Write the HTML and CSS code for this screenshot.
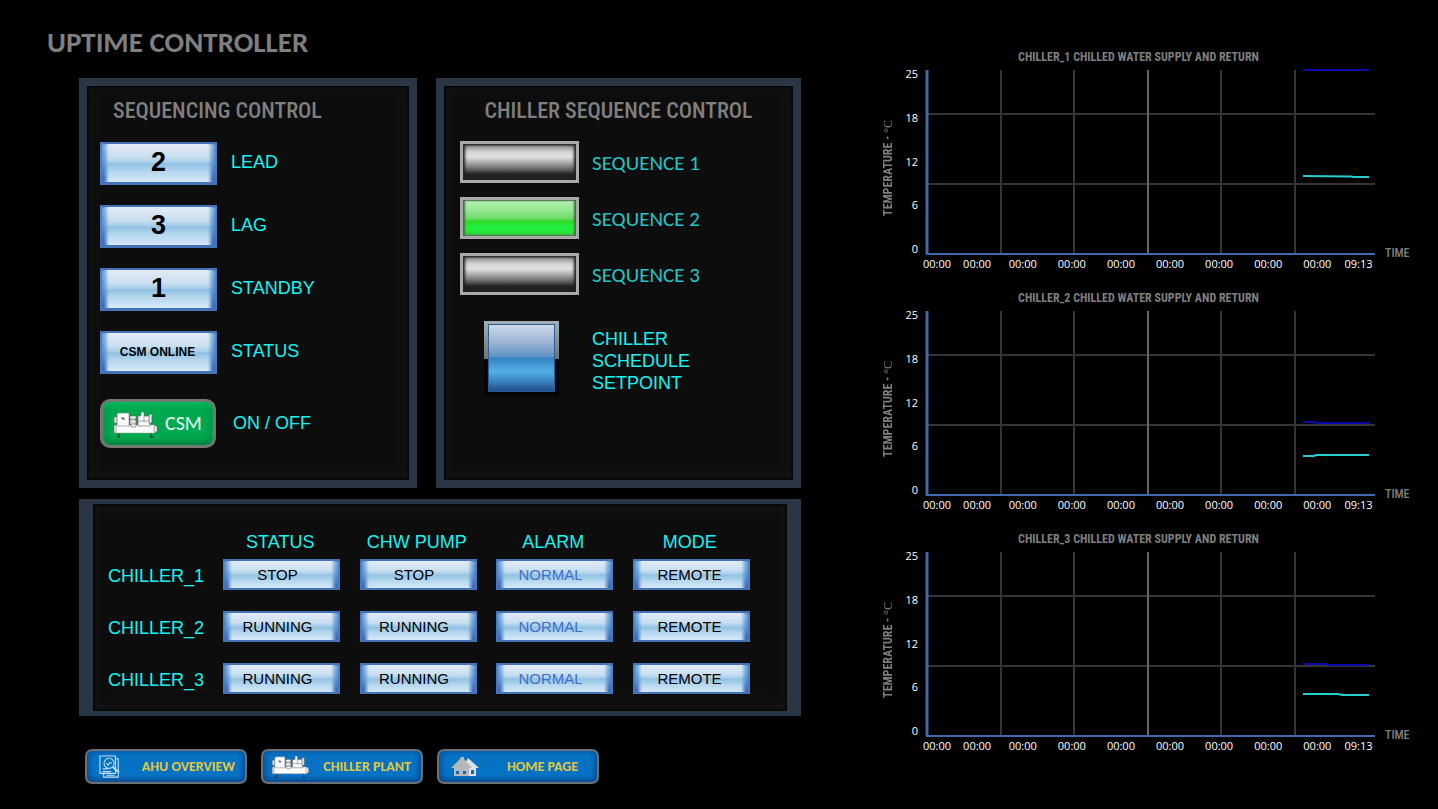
FILE: index.html
```
<!DOCTYPE html>
<html lang="en">
<head>
<meta charset="utf-8">
<meta name="viewport" content="width=device-width, initial-scale=1">
<title>Uptime Controller</title>
<link rel="stylesheet" href="styles.css">
</head>
<body>
<svg class="defs" aria-hidden="true">
  <symbol id="chiller" viewBox="0 0 44 26">
    <path d="M6 20v5M4 25h3M38 20v5M37 25h4" stroke="#333" stroke-width="1.200" fill="none"/>
    <path d="M2 13h40v8H2z" fill="#fff" stroke="#999" stroke-width=".5"/>
    <path d="M1 13h2v8H1zM41 14h3v6h-3z" fill="#eee" stroke="#666" stroke-width=".5"/>
    <path d="M4 2l2-1h10v13H4z" fill="#fff" stroke="#777" stroke-width=".6"/>
    <path d="M1 5h3v6H1z" fill="#ddd" stroke="#666" stroke-width=".5"/>
    <path d="M8 6h3M9 7h3" stroke="#222" stroke-width=".8"/>
    <circle cx="20" cy="10" r="3.500" fill="#ddd" stroke="#555" stroke-width=".8"/>
    <path d="M17 4h6v3h-6zM18 12h5v3h-5z" fill="#f4f4f4" stroke="#666" stroke-width=".6"/>
    <path d="M25 4h3V0h3v4h6v10H25z" fill="#f8f8f8" stroke="#666" stroke-width=".6"/>
    <path d="M25 9h12M31 4v6" stroke="#777" stroke-width=".6"/>
    <path d="M36 2h3v9h-3z" fill="#e4e4e4" stroke="#555" stroke-width=".6"/>
  </symbol>
</svg>
<main class="page">
  <section class="controls">
    <h1 class="page-title">UPTIME CONTROLLER</h1>
    <div class="panels">
      <section class="panel sequencing">
        <h2 class="panel-title">SEQUENCING CONTROL</h2>
        <div class="readings">
          <output class="display" id="lead">2</output><label for="lead">LEAD</label>
          <output class="display" id="lag">3</output><label for="lag">LAG</label>
          <output class="display" id="standby">1</output><label for="standby">STANDBY</label>
          <output class="display display-text" id="status">CSM ONLINE</output><label for="status">STATUS</label>
        </div>
        <div class="power">
          <button type="button" class="csm" id="csm"><svg class="chiller-icon" aria-hidden="true"><use href="#chiller"/></svg><span>CSM</span></button>
          <label for="csm">ON / OFF</label>
        </div>
      </section>
      <section class="panel sequence">
        <h2 class="panel-title">CHILLER SEQUENCE CONTROL</h2>
        <div class="lamps">
          <button type="button" class="lamp" id="seq1"></button><label for="seq1">SEQUENCE 1</label>
          <button type="button" class="lamp lamp-on" id="seq2"></button><label for="seq2">SEQUENCE 2</label>
          <button type="button" class="lamp" id="seq3"></button><label for="seq3">SEQUENCE 3</label>
        </div>
        <div class="setpoint">
          <button type="button" class="setpoint-button" id="setpoint"><span class="setpoint-face"></span></button>
          <label for="setpoint">CHILLER<br>SCHEDULE<br>SETPOINT</label>
        </div>
      </section>
      <section class="panel overview">
        <table class="chillers">
          <thead><tr><td></td><th scope="col">STATUS</th><th scope="col">CHW PUMP</th><th scope="col">ALARM</th><th scope="col">MODE</th></tr></thead>
          <tbody>
            <tr><th scope="row">CHILLER_1</th><td><span class="chip">STOP</span></td><td><span class="chip">STOP</span></td><td><span class="chip chip-normal">NORMAL</span></td><td><span class="chip chip-mode">REMOTE</span></td></tr>
            <tr><th scope="row">CHILLER_2</th><td><span class="chip">RUNNING</span></td><td><span class="chip">RUNNING</span></td><td><span class="chip chip-normal">NORMAL</span></td><td><span class="chip chip-mode">REMOTE</span></td></tr>
            <tr><th scope="row">CHILLER_3</th><td><span class="chip">RUNNING</span></td><td><span class="chip">RUNNING</span></td><td><span class="chip chip-normal">NORMAL</span></td><td><span class="chip chip-mode">REMOTE</span></td></tr>
          </tbody>
        </table>
      </section>
    </div>
    <nav class="links">
      <a class="link" href="#ahu">
        <svg class="link-icon" viewBox="0 0 24 26" fill="none" stroke="#c3def3" stroke-width="1.2" aria-hidden="true"><path d="M1 1h17v19H1z"/><path d="M18 4h3v20H5v-4M4 15h6M4 18h9M8 22h9"/><circle cx="11" cy="9" r="5.500"/><path d="M8 9l2 2 2-3 2 1" /><path d="M15 13l7 6" stroke-width="2"/></svg>
        <span>AHU OVERVIEW</span></a>
      <a class="link" href="#plant"><svg class="chiller-icon" aria-hidden="true"><use href="#chiller"/></svg><span>CHILLER PLANT</span></a>
      <a class="link link-home" href="#home">
        <svg class="home-icon" viewBox="0 0 28 20" aria-hidden="true"><path d="M17 1l11 10h-3v8H13V8z" fill="#d9e1e8"/><path d="M10 0h3v2l8 9h-3v8H3v-8H0L9 2z" fill="#b5b8bc"/><path d="M5 14h3v3H5zM12 14h3v3h-3zM20 13h3v4h-3z" fill="#1267ae"/></svg>
        <span>HOME PAGE</span></a>
    </nav>
  </section>
  <section class="charts">
    <figure class="chart">
      <figcaption class="chart-title">CHILLER_1 CHILLED WATER SUPPLY AND RETURN</figcaption>
      <div class="y-title"><span>TEMPERATURE - <span class="unit">°C</span></span></div>
      <div class="y-ticks"><span>25</span><span>18</span><span>12</span><span>6</span><span>0</span></div>
      <svg class="plot" viewBox="0 0 449 184" preserveAspectRatio="none"><path class="grid-line" d="M75 0V184M148 0V184M295 0V184M369 0V184M0 44H449M0 114H449"/><path class="grid-mid" d="M222 0V184"/><path class="axis-y" d="M1 0V184"/><path class="axis-x" d="M0 184H449"/><path class="supply" d="M377 0H443"/><path class="return" d="M377 106L425 106.500L428 107H443"/></svg>
      <div class="x-title">TIME</div>
      <div class="x-ticks"><span>00:00</span><span>00:00</span><span>00:00</span><span>00:00</span><span>00:00</span><span>00:00</span><span>00:00</span><span>00:00</span><span>00:00</span><span>09:13</span></div>
    </figure>
    <figure class="chart">
      <figcaption class="chart-title">CHILLER_2 CHILLED WATER SUPPLY AND RETURN</figcaption>
      <div class="y-title"><span>TEMPERATURE - <span class="unit">°C</span></span></div>
      <div class="y-ticks"><span>25</span><span>18</span><span>12</span><span>6</span><span>0</span></div>
      <svg class="plot" viewBox="0 0 449 184" preserveAspectRatio="none"><path class="grid-line" d="M75 0V184M148 0V184M295 0V184M369 0V184M0 44H449M0 114H449"/><path class="grid-mid" d="M222 0V184"/><path class="axis-y" d="M1 0V184"/><path class="axis-x" d="M0 184H449"/><path class="supply" d="M377 111H388L390 112H443"/><path class="return" d="M377 145H388L390 144H443"/></svg>
      <div class="x-title">TIME</div>
      <div class="x-ticks"><span>00:00</span><span>00:00</span><span>00:00</span><span>00:00</span><span>00:00</span><span>00:00</span><span>00:00</span><span>00:00</span><span>00:00</span><span>09:13</span></div>
    </figure>
    <figure class="chart">
      <figcaption class="chart-title">CHILLER_3 CHILLED WATER SUPPLY AND RETURN</figcaption>
      <div class="y-title"><span>TEMPERATURE - <span class="unit">°C</span></span></div>
      <div class="y-ticks"><span>25</span><span>18</span><span>12</span><span>6</span><span>0</span></div>
      <svg class="plot" viewBox="0 0 449 184" preserveAspectRatio="none"><path class="grid-line" d="M75 0V184M148 0V184M295 0V184M369 0V184M0 44H449M0 114H449"/><path class="grid-mid" d="M222 0V184"/><path class="axis-y" d="M1 0V184"/><path class="axis-x" d="M0 184H449"/><path class="supply" d="M377 112H400L402 113H443"/><path class="return" d="M377 142H412L416 143H443"/></svg>
      <div class="x-title">TIME</div>
      <div class="x-ticks"><span>00:00</span><span>00:00</span><span>00:00</span><span>00:00</span><span>00:00</span><span>00:00</span><span>00:00</span><span>00:00</span><span>00:00</span><span>09:13</span></div>
    </figure>
  </section>
</main>
</body>
</html>
```
FILE: styles.css
```
:root {
  --sans: "Liberation Sans", Arial, sans-serif;
  --narrow: "Roboto Condensed", Roboto, "Arial Narrow", sans-serif;
  --humanist: Carlito, Lato, sans-serif;
  --cyan: #14f4f2;
  --grey: #7f7f7f;
}
* { box-sizing: border-box; }
body { margin: 0; background: #000; font-family: var(--sans); }
button { margin: 0; padding: 0; border: 0; cursor: pointer; }
.defs { display: none; }

.page { display: grid; grid-template-columns: 801fr 637fr; }
.controls { padding: 24px 0 20px 79px; }
.page-title { margin: 0 0 18px -32px; color: var(--grey); font: 700 29px/36px var(--humanist); }

.panels { display: grid; grid-template-columns: 338fr 365fr; gap: 11px 19px; }
.panel {
  border: 8px solid #2b3644;
  background: #0d0d0d;
  box-shadow: inset 0 0 3px 1px #000, inset 0 0 14px 2px #171717;
  color: var(--cyan);
  font-size: 18px;
}
.panel-title { margin: 0; color: var(--grey); font: 500 22px/26px var(--narrow); white-space: nowrap; }

.sequencing { padding: 12px 13px 32px; }
.sequencing .panel-title { padding-left: 13px; }
.readings { display: grid; grid-template-columns: 117px 1fr; gap: 20px 14px; align-items: center; margin-top: 18px; }
.readings label { padding-bottom: 2px; }
.display, .chip {
  position: relative; isolation: isolate;
  display: flex; align-items: center; justify-content: center;
  color: #000;
  border: solid #4473b8; border-width: 2px 0 3px;
  background: linear-gradient(#7fb2df, #5c98d2 50%, #3865b4);
  box-shadow: inset 2px 0 2px #4679c0, inset -2px 0 2px #4679c0;
}
.display::before, .chip::before {
  content: ""; position: absolute; inset: 0; z-index: -1;
  background: linear-gradient(#e3ebf5, #c9dff0 35%, #a6cde9 49%, #8fc0e2 52%, #b4d6ee 72%, #d6e8f8);
  mask-image: linear-gradient(90deg, transparent 4px, #000 9px, #000 calc(100% - 9px), transparent calc(100% - 4px));
}
.display { height: 43px; padding-bottom: 2px; font-size: 27px; font-weight: 700; }
.display-text { padding: 0 2px 0 0; font-size: 12px; }
.power { display: flex; align-items: center; gap: 17px; margin-top: 25px; }
.csm {
  display: flex; align-items: center; gap: 8px;
  width: 116px; height: 49px; padding: 0 13px 2px;
  border: 3px solid #72776f; border-radius: 10px;
  background: #00a94f;
  box-shadow: inset 0 3px 4px #05bd5c, inset 0 -4px 5px #028340, inset 4px 0 4px #04984a, inset -4px 0 4px #04984a;
  color: #e6fff0; font: 400 20px/22px var(--humanist);
}
.csm .chiller-icon { margin: 4px 0 0 -3px; }
.chiller-icon { flex: none; width: 44px; height: 26px; }

.sequence { padding: 12px 16px 24px; }
.sequence .panel-title { text-align: center; }
.lamps { display: grid; grid-template-columns: 119px 1fr; gap: 14px 13px; align-items: center; margin-top: 17px; color: #22c4c4; font: 400 21px/24px var(--humanist); }
.lamps label { padding-top: 2px; }
.lamp {
  height: 42px;
  border: 3px solid #a9a9a9;
  background: linear-gradient(#777, #d5d5d5 22%, #e2e2e2 36%, #aaa 52%, #666 70%, #333 80%, #202020 84%, #242424);
  box-shadow: inset 2px 0 3px #222, inset -2px 0 3px #222, inset 0 1px 2px #333;
}
.lamp-on {
  background: linear-gradient(#b2efb0, #93e890 30%, #68d962 53%, #2fd925 58%, #1ff13e 76%, #24e33a 90%, #3dba3a);
  box-shadow: inset 2px 0 2px #4b6b4a, inset -2px 0 2px #4b6b4a, inset 0 0 1px 1px #5a8a58;
}
.setpoint { display: flex; align-items: center; gap: 33px; margin: 26px 0 0 24px; line-height: 22px; }
.setpoint label { padding-top: 4px; }
.setpoint-button { width: 75px; height: 76px; padding: 3px 4px 5px; background: linear-gradient(#a3b1b4, #6d7472 50%, #050608 50%); }
.setpoint-face {
  display: block; height: 100%;
  border: 1px solid #2a5d93;
  background: linear-gradient(#cdd8e8, #9fb5d4 25%, #5f92c4 48%, #3582c2 50%, #52b0e4 70%, #3b86c4 84%, #21508a);
}

.overview { grid-column: 1 / -1; border-width: 5px 14px; padding: 27px 18px 17px 15px; }
.chillers { width: 100%; border-collapse: collapse; table-layout: fixed; }
.chillers th, .chillers td { padding: 0; font-weight: 400; vertical-align: middle; }
.chillers thead td { width: 115px; }
.chillers thead th { padding: 0 22px 6px 0; line-height: 22px; }
.chillers tbody th { padding-top: 4px; text-align: left; }
.chillers tbody tr + tr td { padding-top: 21px; }
.chillers tbody tr + tr th { padding-top: 25px; }
.chip { width: 117px; height: 31px; padding-right: 8px; border-width: 2px 0; font-size: 15px; }
.chip-normal { color: #3e6fc9; }
.chip-mode { padding-right: 3px; }

.links { display: flex; gap: 14px; margin: 33px 0 0 6px; }
.link {
  display: flex; align-items: center; justify-content: space-between;
  width: 162px; height: 35px; padding: 0 10px 0 12px;
  border: 2px solid #6c7076; border-radius: 7px;
  background: #0572c4;
  box-shadow: inset 0 -3px 4px #0b4f92, inset 3px 0 4px #0a5aa2, inset -3px 0 4px #0a5aa2;
  color: #e2c840; font: 700 14px/18px var(--humanist); text-decoration: none; white-space: nowrap;
}
.link .chiller-icon { width: 40px; height: 22px; margin-left: -5px; }
.link-icon { width: 22px; height: 24px; }
.home-icon { width: 28px; height: 20px; }
.link-home { padding-right: 19px; }

.charts { display: grid; align-content: start; padding: 49px 28px 0 80px; }
.chart {
  display: grid; margin: 0; height: 241px;
  grid-template-columns: 14px 23px 8px minmax(0, 1fr) 35px;
  grid-template-rows: 21px 184px 24px;
}
.chart-title { grid-area: 1 / 4; padding-right: 24px; text-align: center; color: var(--grey); font: 700 12px/16px var(--narrow); white-space: nowrap; }
.y-title { grid-area: 2 / 1; display: flex; align-items: center; justify-content: center; color: var(--grey); font: 700 12px/14px var(--narrow); padding-top: 12px; }
.y-title > span { writing-mode: vertical-rl; transform: rotate(180deg); white-space: nowrap; }
.unit { font-family: "Liberation Serif", serif; font-weight: 400; }
.y-ticks { grid-area: 2 / 2; display: flex; flex-direction: column; justify-content: space-between; align-items: flex-end; margin: -3px 0 -2px; color: #fff; font: 11px/14px "Open Sans", sans-serif; }
.plot { grid-area: 2 / 4; width: 100%; height: 184px; overflow: visible; fill: none; }
.grid-line { stroke: #353535; stroke-width: 2; }
.grid-mid { stroke: #666; stroke-width: 2; }
.axis-y { stroke: #4169ad; stroke-width: 3; }
.axis-x { stroke: #4169ad; stroke-width: 2; }
.supply { stroke: #0a0aa8; stroke-width: 2; }
.return { stroke: #25cfd0; stroke-width: 2; }
.x-title { grid-area: 2 / 5; align-self: end; padding-left: 10px; color: var(--grey); font: 500 12px/14px var(--narrow); margin-bottom: -6px; }
.x-ticks { grid-area: 3 / 4; display: grid; grid-template-columns: 38fr 42fr repeat(7, 49fr) 33fr; margin: 3px 0 0 -8px; color: #fff; font: 11px/14px "Open Sans", sans-serif; }
.x-ticks span { display: flex; justify-content: center; }
```
